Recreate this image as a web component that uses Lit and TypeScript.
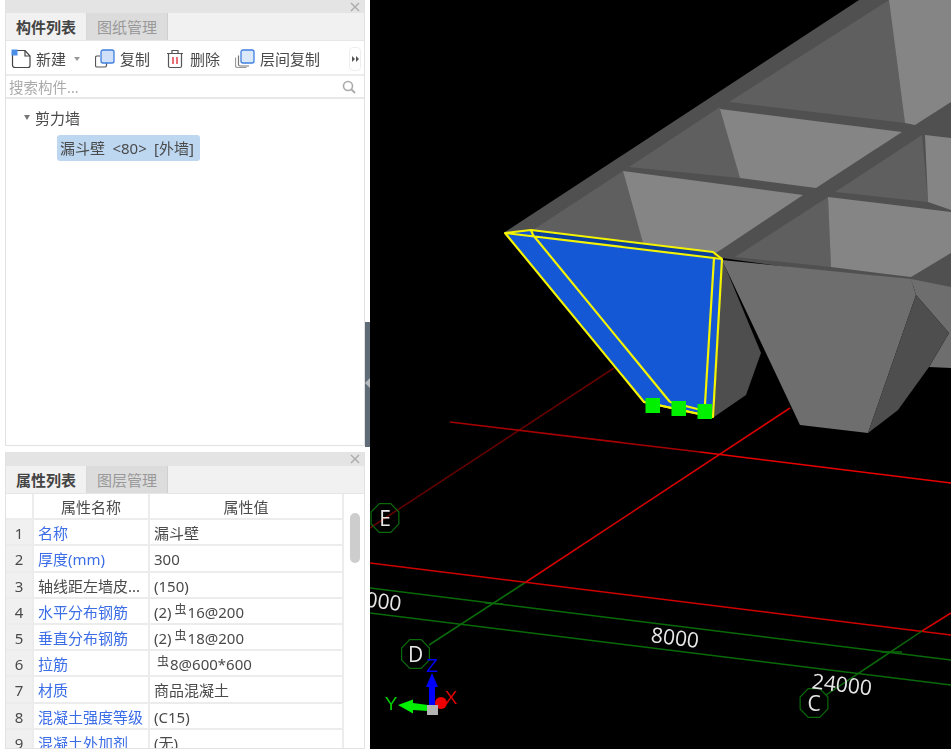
import { LitElement, html, css, svg } from 'lit';
import { customElement } from 'lit/decorators.js';

type Row = { name: string; value: unknown; blue: boolean };

const rebar = html`<span class="rebar">虫</span>`;

const rows: Row[] = [
    { name: '名称', value: '漏斗壁', blue: true },
    { name: '厚度(mm)', value: '300', blue: true },
    { name: '轴线距左墙皮...', value: '(150)', blue: false },
    { name: '水平分布钢筋', value: html`(2)${rebar}16@200`, blue: true },
    { name: '垂直分布钢筋', value: html`(2)${rebar}18@200`, blue: true },
    { name: '拉筋', value: html`<span class="indent"></span>${rebar}8@600*600`, blue: true },
    { name: '材质', value: '商品混凝土', blue: true },
    { name: '混凝土强度等级', value: '(C15)', blue: true },
    { name: '混凝土外加剂', value: '(无)', blue: true },
];

// gray faces of the hopper roof: [points, fill]
const faces: [string, string][] = [
    ['505,232 859,0 951,0 951,290 722,258', '#505050'],
    ['533,230 623,171 643,243', '#5f5f5f'],
    ['623,171 803,195 716,253 643,243', '#858585'],
    ['629,167 720,107 740,178', '#5f5f5f'],
    ['720,109 902,132 816,188 740,178', '#858585'],
    ['729,102 889,0 905,123', '#5f5f5f'],
    ['889,0 951,0 951,102 915,125 905,123', '#858585'],
    ['835,192 922,135 928,202', '#5f5f5f'],
    ['925,135 951,138 951,210 928,202', '#858585'],
    ['735,257 828,197 831,267', '#5f5f5f'],
    ['828,197 951,212 951,253 911,277 831,267', '#858585'],
    ['722,259 761,353 746,395 714,417', '#4e4e4e'],
    ['722,260 911,279 916,295 868,433 800,425', '#6e6e6e'],
    ['911,279 951,287 951,368 929,367 949,333 916,295', '#6e6e6e'],
    ['916,295 949,333 929,367 898,410 868,433', '#4e4e4e'],
];

// grid lines: [x1, y1, x2, y2, stroke]
const lines: [number, number, number, number, string][] = [
    [614, 368, 370, 528, '#640000'],
    [450, 422, 700, 452, '#a80000'],
    [700, 452, 951, 483, '#e80000'],
    [790, 408, 526, 582, '#d80000'],
    [526, 582, 429, 645, '#0a6a0a'],
    [370, 563, 951, 635, '#d00000'],
    [951, 613, 922, 631, '#d00000'],
    [922, 631, 826, 695, '#0a6a0a'],
    [370, 588, 951, 660, '#0a6a0a'],
    [370, 613, 951, 685, '#0a6a0a'],
    [485, 603, 503, 604, '#0a6a0a'],
    [881, 652, 902, 652, '#0a6a0a'],
];

const axes: [number, number, string][] = [
    [385, 518, 'E'],
    [415.5, 654, 'D'],
    [814, 703, 'C'],
];

function octagon(cx: number, cy: number) {
    const pts = [];
    for (let i = 0; i < 8; i++) {
        const a = (Math.PI / 4) * i + Math.PI / 8;
        pts.push(`${cx + 15 * Math.cos(a)},${cy + 15.5 * Math.sin(a)}`);
    }
    return pts.join(' ');
}

@customElement('app-root')
export class AppRoot extends LitElement {
    static styles = css`
        :host {
            display: flex;
            width: 951px;
            height: 749px;
            overflow: hidden;
            background: #fff;
            font-family: 'Noto Sans', 'Noto Sans CJK SC', sans-serif;
            font-size: 15px;
            color: #4a4a4a;
        }

        .side {
            position: relative;
            width: 370px;
            flex: none;
            box-sizing: border-box;
            padding: 0 5px;
            display: flex;
            flex-direction: column;
            gap: 6px;
            filter: blur(0.3px);
        }

        .handle {
            position: absolute;
            right: 0;
            top: 322px;
            width: 5px;
            height: 125px;
            background: #5f6b76;
        }

        .handle::after {
            content: '';
            position: absolute;
            left: 0;
            top: 56px;
            border: 5px solid transparent;
            border-left-width: 0;
            border-right-color: #b5b9bd;
        }

        .panel {
            display: flex;
            flex-direction: column;
            box-sizing: border-box;
            border: 1px solid #e2e2e2;
            border-top: 0;
            overflow: hidden;
        }

        .panel.list {
            height: 446px;
        }

        .panel.props {
            flex: 1;
        }

        .title {
            flex: none;
            height: 13px;
            background: #e4e4e4;
            display: flex;
            justify-content: flex-end;
            align-items: center;
            padding-right: 4px;
        }

        .props .title {
            height: 14px;
        }

        .title svg {
            width: 10px;
            height: 10px;
        }

        .tabs {
            flex: none;
            box-sizing: border-box;
            height: 28px;
            display: flex;
            background: #f1f1f1;
            border-bottom: 1px solid #e6e6e6;
        }

        .tab {
            width: 80px;
            display: flex;
            align-items: center;
            justify-content: center;
            border-right: 1px solid #d8d8d8;
            font-weight: 700;
            color: #444;
        }

        .tab.off {
            width: 80px;
            background: #dcdcdc;
            border-right: 1px solid #cfcfcf;
            font-weight: 400;
            color: #999;
        }

        .toolbar {
            flex: none;
            box-sizing: border-box;
            height: 35px;
            display: flex;
            align-items: center;
            gap: 15px;
            padding: 2px 3px 0 5px;
            border-bottom: 2px solid #ececec;
        }

        .tool {
            display: flex;
            align-items: center;
            gap: 5px;
            line-height: 20px;
            white-space: nowrap;
        }

        .tool svg {
            width: 20px;
            height: 20px;
            flex: none;
        }

        .caret {
            width: 0;
            height: 0;
            margin-left: 3px;
            border: 3px solid transparent;
            border-top: 4px solid #999;
            border-bottom: 0;
        }

        .more {
            margin-left: auto;
            width: 12px;
            height: 24px;
            box-sizing: border-box;
            border: 1px solid #eee;
            border-radius: 4px;
            display: flex;
            align-items: center;
            justify-content: center;
            gap: 1px;
        }

        .more i {
            width: 0;
            height: 0;
            border: 3px solid transparent;
            border-left: 3px solid #555;
            border-right: 0;
        }

        .search {
            flex: none;
            box-sizing: border-box;
            height: 23px;
            display: flex;
            align-items: center;
            justify-content: space-between;
            padding: 0 8px 0 3px;
            border-bottom: 2px solid #e8e8e8;
            font-size: 14.5px;
            color: #aaa;
        }

        .search svg {
            width: 14px;
            height: 14px;
        }

        .tree {
            flex: 1;
            padding: 8px 0 0 18px;
        }

        .group {
            display: flex;
            align-items: center;
            gap: 5px;
            height: 21px;
        }

        .group .caret {
            margin: 0;
            border-width: 3.5px;
            border-top: 5px solid #777;
            border-bottom: 0;
        }

        .leaf {
            display: inline-block;
            margin: 7px 0 0 33px;
            padding: 0 6px 0 3px;
            height: 26px;
            line-height: 26px;
            border-radius: 3px;
            background: #bdd7f1;
            white-space: pre;
            word-spacing: 3.5px;
        }

        .sheet {
            flex: 1;
            display: flex;
            min-height: 0;
        }

        .table {
            width: 338px;
            flex: none;
            display: grid;
            grid-template-columns: 28px 116px 1fr;
            grid-auto-rows: 26.2px;
            align-content: start;
        }

        .cell {
            box-sizing: border-box;
            border-right: 2px solid #ececec;
            border-bottom: 2px solid #ececec;
            padding-left: 4px;
            line-height: 27px;
            white-space: nowrap;
            overflow: hidden;
        }

        .cell.head {
            padding: 0;
            text-align: center;
        }

        .cell.num {
            padding: 0;
            text-align: center;
            background: #f0f0f0;
        }

        .cell.blue {
            color: #3b6de6;
        }

        .rebar {
            display: inline-block;
            margin: 0 1px 0 3px;
            font-size: 12px;
            line-height: 12px;
            vertical-align: 4px;
        }

        .indent {
            display: inline-block;
            width: 0;
        }

        .track {
            flex: 1;
            padding: 19px 0 0 6px;
        }

        .thumb {
            width: 10px;
            height: 50px;
            border-radius: 5px;
            background: #cdcdcd;
        }

        .scene {
            flex: 1;
            min-width: 0;
            background: #000;
        }

        .scene svg {
            display: block;
            width: 581px;
            height: 749px;
            filter: blur(0.35px);
        }

        .scene text {
            fill: #e8e8e8;
            font-family: 'Open Sans', sans-serif;
            font-size: 21px;
        }

        .scene text.axis {
            text-anchor: middle;
        }

        .scene text.gizmo {
            font-family: 'Liberation Sans', sans-serif;
            font-size: 19px;
            text-anchor: middle;
        }

        .scene text.z {
            fill: #0000ff;
        }

        .scene text.x {
            fill: #e00000;
        }

        .scene text.y {
            fill: #00d000;
        }
    `;

    renderClose() {
        return html`<div class="title">
            <svg viewBox="0 0 10 10"><path d="M1 1l8 8M9 1l-8 8" stroke="#aaa" stroke-width="1.4" /></svg>
        </div>`;
    }

    renderToolbar() {
        return html`<div class="toolbar">
            <div class="tool">
                <svg viewBox="0 0 20 20">
                    <path d="M1.5 4v12a2.5 2.5 0 0 0 2.5 2.5h13a2 2 0 0 0 2-2V7l-5-5.500H6" fill="none" stroke="#444" stroke-width="1.2" />
                    <path d="M14 1.500V7h5" fill="none" stroke="#444" stroke-width="1.2" />
                    <rect x="0.5" y="0.5" width="6" height="6" fill="#4a8fe8" />
                </svg>
                新建<span class="caret"></span>
            </div>
            <div class="tool">
                <svg viewBox="0 0 20 20">
                    <path d="M5 7H2a1.500 1.500 0 0 0-1.500 1.500v8A1.500 1.500 0 0 0 2 18h8a1.500 1.500 0 0 0 1.500-1.500V14" fill="none" stroke="#555" stroke-width="1.2" />
                    <rect x="6" y="1" width="13" height="13" rx="2" fill="#cfe0f8" stroke="#3f7fe0" stroke-width="1.3" />
                </svg>
                复制
            </div>
            <div class="tool">
                <svg viewBox="0 0 20 20">
                    <path d="M3.500 4.500V17a1.500 1.500 0 0 0 1.500 1.500h10a1.500 1.500 0 0 0 1.500-1.500V4.500" fill="none" stroke="#555" stroke-width="1.2" />
                    <path d="M2 4.500h16M7 4.500V1.500h6v3" fill="none" stroke="#555" stroke-width="1.2" />
                    <path d="M8 8v7M12 8v7" stroke="#e8404a" stroke-width="1.5" />
                </svg>
                删除
            </div>
            <div class="tool">
                <svg viewBox="0 0 20 20">
                    <path d="M3.500 6.500v9a1.500 1.500 0 0 0 1.500 1.500h9" fill="none" stroke="#777" stroke-width="1.2" />
                    <path d="M0.500 8.500v8a2 2 0 0 0 2 2h9" fill="none" stroke="#999" stroke-width="1.2" />
                    <rect x="6" y="1" width="13" height="13" rx="2" fill="#dce9fa" stroke="#3f7fe0" stroke-width="1.3" />
                </svg>
                层间复制
            </div>
            <div class="more"><i></i><i></i></div>
        </div>`;
    }

    renderScene() {
        return svg`
            ${lines.map(
                ([x1, y1, x2, y2, c]) =>
                    svg`<line x1=${x1} y1=${y1} x2=${x2} y2=${y2} stroke=${c} stroke-width="1.5" />`,
            )}
            ${faces.map(([p, c]) => svg`<polygon points=${p} fill=${c} />`)}
            <polygon points="505,233 531,230 722,259 713,417 644,402" fill="#1458d6" />
            <polygon points="531,230 713,252 714,258 533,235" fill="#0b3f9e" />
            <g fill="none" stroke="#f4f400" stroke-width="2.2" stroke-linejoin="round">
                <polygon points="505,233 531,230 713,252 722,259 713,417 644,402" />
                <path d="M505,233L714,258L722,259M531,230L533,235L670,402M714,258L705,404" />
                <path d="M644,402L713,417M670,402L705,411" />
            </g>
            <g fill="#00f000">
                <rect x="645.5" y="398" width="14.5" height="15" />
                <rect x="671.5" y="401" width="14.5" height="15" />
                <rect x="697.5" y="404" width="14.5" height="15" />
            </g>
            ${axes.map(
                ([x, y, t]) => svg`
                    <polygon points=${octagon(x, y)} fill="none" stroke="#0a6a0a" stroke-width="1.2" />
                    <text class="axis" x=${x} y=${y + 8}>${t}</text>
                `,
            )}
            <text x="401.5" y="611" text-anchor="end" transform="rotate(7 401 603)">8000</text>
            <text x="651" y="645" transform="rotate(7 675 638)">8000</text>
            <text x="812" y="692" transform="rotate(7 843 684)">24000</text>
            <circle cx="441" cy="703" r="6" fill="#f00000" />
            <path d="M432 673l6 14h-3v19h-6v-19h-3z" fill="#0000ff" />
            <path d="M398 705l15-5.500v3.500l15 2v6l-15-1v3.500z" fill="#00f000" />
            <rect x="427" y="705" width="11" height="10" fill="#b4b4b4" />
            <text class="gizmo z" x="432" y="672">Z</text>
            <text class="gizmo x" x="451" y="704">X</text>
            <text class="gizmo y" x="391" y="710">Y</text>
        `;
    }

    render() {
        return html`
            <div class="side">
                <div class="panel list">
                    ${this.renderClose()}
                    <div class="tabs">
                        <div class="tab">构件列表</div>
                        <div class="tab off">图纸管理</div>
                    </div>
                    ${this.renderToolbar()}
                    <div class="search">
                        搜索构件...
                        <svg viewBox="0 0 14 14">
                            <circle cx="6" cy="6" r="4.5" fill="none" stroke="#aaa" stroke-width="1.6" />
                            <path d="M9.500 9.500L13 13" stroke="#aaa" stroke-width="1.8" />
                        </svg>
                    </div>
                    <div class="tree">
                        <div class="group"><span class="caret"></span>剪力墙</div>
                        <div class="leaf">漏斗壁 &lt;80&gt; [外墙]</div>
                    </div>
                </div>
                <div class="panel props">
                    ${this.renderClose()}
                    <div class="tabs">
                        <div class="tab">属性列表</div>
                        <div class="tab off">图层管理</div>
                    </div>
                    <div class="sheet">
                        <div class="table">
                            <div class="cell head"></div>
                            <div class="cell head">属性名称</div>
                            <div class="cell head">属性值</div>
                            ${rows.map(
                                (r, i) => html`
                                    <div class="cell num">${i + 1}</div>
                                    <div class="cell ${r.blue ? 'blue' : ''}">${r.name}</div>
                                    <div class="cell">${r.value}</div>
                                `,
                            )}
                        </div>
                        <div class="track"><div class="thumb"></div></div>
                    </div>
                </div>
                <div class="handle"></div>
            </div>
            <div class="scene">
                <svg viewBox="370 0 581 749">${this.renderScene()}</svg>
            </div>
        `;
    }
}
